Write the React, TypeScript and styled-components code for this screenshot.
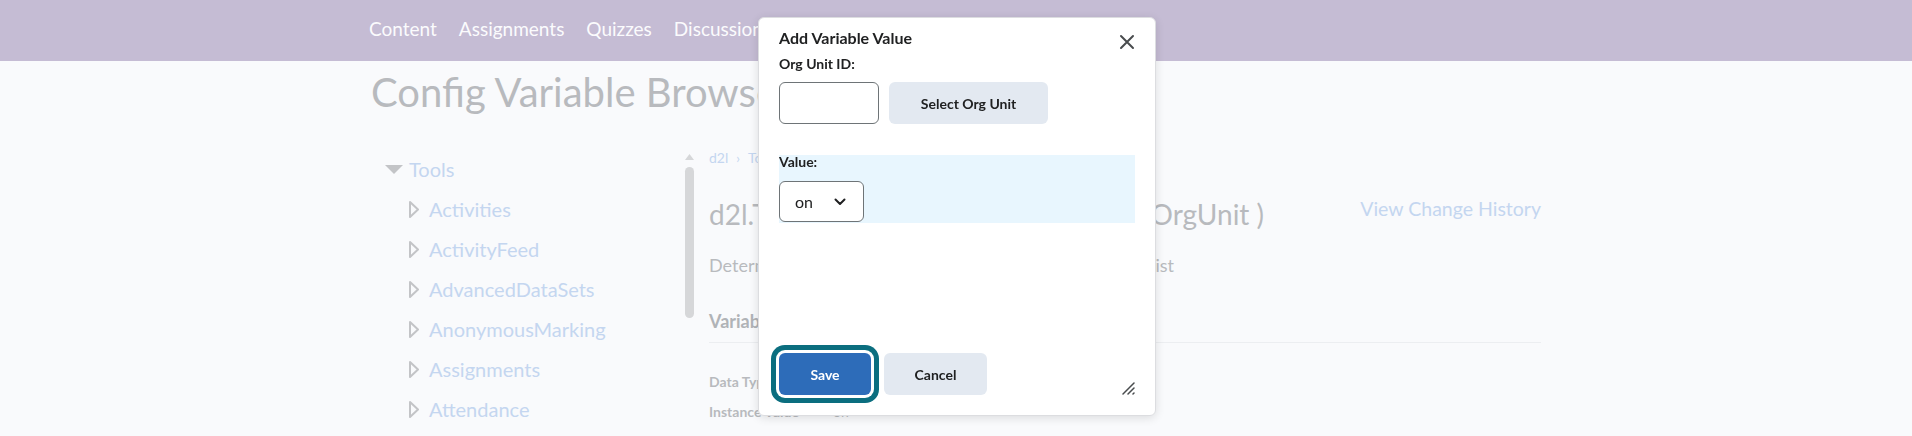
import React, { FC } from 'react';
import styled, { createGlobalStyle } from 'styled-components';

const GlobalStyle = createGlobalStyle`
  html, body {
    margin: 0;
    padding: 0;
    overflow: hidden;
    background-color: #f9fafc;
    font-family: Lato, "Open Sans", sans-serif;
  }
`;

const Header = styled.div`
  height: 61px;
  background-color: #c5bcd4;
`;

const Container = styled.div`
  width: 1170px;
  margin: 0 auto;
`;

const Nav = styled.nav`
  display: flex;
  gap: 22px;
  padding-top: 17px;
  margin-left: -2px;
`;

const NavItem = styled.span`
  font-size: 19px;
  line-height: 24px;
  color: #fbfbfd;
`;

const PageTitle = styled.h1`
  margin: 7px 0 0;
  font-size: 40px;
  line-height: 48px;
  font-weight: 400;
  color: #b8babe;
  white-space: nowrap;
`;

const Main = styled.div`
  display: grid;
  grid-template-columns: 314px 9px 1fr;
  margin-top: 32px;
`;

const Tree = styled.ul`
  list-style: none;
  margin: 0;
  padding: 1px 0 0 14px;
`;

const TreeRow = styled.li<{ $child?: boolean }>`
  display: flex;
  align-items: center;
  gap: ${(p) => (p.$child ? '10px' : '6px')};
  margin-left: ${(p) => (p.$child ? '24px' : '0')};
  height: 40px;
  line-height: 40px;
  font-size: 20px;
  color: #c4d6f0;
`;

const Scrollbar = styled.div`
  display: flex;
  flex-direction: column;
  align-items: center;
  padding-top: 6px;
`;

const ScrollThumb = styled.div`
  width: 9px;
  height: 151px;
  margin-top: 7px;
  border-radius: 5px;
  background-color: #d6d7d9;
`;

const Content = styled.div`
  padding-left: 15px;
  min-width: 0;
`;

const Breadcrumb = styled.div`
  font-size: 14px;
  line-height: 20px;
  color: #c4d6f0;
`;

const CrumbSep = styled.span`
  margin: 0 8px;
  font-size: 13px;
`;

const HeadingRow = styled.div`
  display: flex;
  justify-content: space-between;
  align-items: flex-start;
  margin-top: 29px;
`;

const VarHeading = styled.h2`
  margin: 0;
  font-size: 28px;
  line-height: 34px;
  font-weight: 400;
  color: #b8babe;
  white-space: nowrap;
`;

const HistoryLink = styled.span`
  font-size: 19.5px;
  line-height: 24px;
  color: #c4d6f0;
`;

const Description = styled.p`
  margin: 22px 0 0;
  font-size: 18px;
  line-height: 24px;
  color: #b8babe;
  white-space: nowrap;
`;

const SectionTitle = styled.h3`
  margin: 32px 0 0;
  padding-bottom: 9px;
  border-bottom: 1px solid #eceef1;
  font-size: 18px;
  line-height: 24px;
  font-weight: 700;
  color: #b0b3b7;
`;

const PropGrid = styled.div`
  display: grid;
  grid-template-columns: 124px 1fr;
  margin-top: 24px;
  font-size: 14px;
  line-height: 30px;
  color: #b8babe;
`;

const PropLabel = styled.span`
  font-weight: 700;
`;

const Overlay = styled.div`
  position: fixed;
  inset: 0;
`;

const Dialog = styled.div`
  position: absolute;
  left: 758px;
  top: 17px;
  width: 398px;
  height: 399px;
  box-sizing: border-box;
  padding: 7px 20px 20px;
  display: flex;
  flex-direction: column;
  background-color: #fff;
  border: 1px solid #dcdde0;
  border-radius: 6px;
  box-shadow: 0 2px 10px rgba(0, 0, 0, 0.12);
  color: #202122;
`;

const DialogHeader = styled.div`
  display: flex;
  justify-content: space-between;
  align-items: center;
`;

const DialogTitle = styled.h2`
  margin: 0;
  font-size: 16px;
  line-height: 24px;
  font-weight: 700;
`;

const CloseButton = styled.button`
  display: flex;
  width: 18px;
  height: 18px;
  margin: 8px -1px 0 0;
  padding: 0;
  border: none;
  background: none;
  color: #494c4e;
`;

const FieldLabel = styled.label<{ $tight?: boolean }>`
  display: block;
  margin-top: ${(p) => (p.$tight ? '0' : '3px')};
  font-size: 14px;
  line-height: ${(p) => (p.$tight ? '14px' : '20px')};
  font-weight: 700;
`;

const OrgRow = styled.div`
  display: flex;
  gap: 10px;
  margin-top: 8px;
`;

const TextInput = styled.input`
  width: 100px;
  height: 42px;
  box-sizing: border-box;
  border: 1px solid #6e7477;
  border-radius: 6px;
  background: #fff;
`;

const Button = styled.button<{ $primary?: boolean; $width: number }>`
  width: ${(p) => p.$width}px;
  height: 42px;
  border: none;
  border-radius: 6px;
  font-family: Lato, sans-serif;
  font-size: 14px;
  font-weight: 700;
  color: ${(p) => (p.$primary ? '#fff' : '#202122')};
  background-color: ${(p) => (p.$primary ? '#2d6cb9' : '#e3e9f1')};
  box-shadow: ${(p) => (p.$primary ? '0 0 0 3px #fff, 0 0 0 8px #0b6e7f' : 'none')};
`;

const ValueField = styled.div`
  margin-top: 31px;
  height: 68px;
  background-color: #e8f6fe;
`;

const SelectBox = styled.div`
  display: flex;
  align-items: center;
  justify-content: space-between;
  width: 85px;
  height: 41px;
  box-sizing: border-box;
  margin-top: 12px;
  padding: 0 17px 0 15px;
  border: 1px solid #6e7477;
  border-radius: 6px;
  background-color: #fff;
  font-size: 16px;
`;

const DialogFooter = styled.div`
  display: flex;
  align-items: flex-end;
  gap: 13px;
  margin-top: auto;
`;

const ResizeGrip = styled.svg`
  margin-left: auto;
`;

const treeItems = [
  'Activities',
  'ActivityFeed',
  'AdvancedDataSets',
  'AnonymousMarking',
  'Assignments',
  'Attendance',
];

const App: FC = () => {
  return (
    <>
      <GlobalStyle />
      <Header>
        <Container>
          <Nav>
            <NavItem>Content</NavItem>
            <NavItem>Assignments</NavItem>
            <NavItem>Quizzes</NavItem>
            <NavItem>Discussions</NavItem>
            <NavItem>Grades</NavItem>
          </Nav>
        </Container>
      </Header>
      <Container>
        <PageTitle>Config Variable Browser</PageTitle>
        <Main>
          <Tree>
            <TreeRow>
              <svg width="18" height="9" viewBox="0 0 18 9">
                <path d="M0 0 H18 L9 9 Z" fill="#c3c4c7" />
              </svg>
              Tools
            </TreeRow>
            {treeItems.map((item) => (
              <TreeRow $child key={item}>
                <svg width="10" height="17" viewBox="0 0 10 17">
                  <path d="M1 1 L9 8.5 L1 16 Z" fill="none" stroke="#c3c4c7" strokeWidth="2" strokeLinejoin="round" />
                </svg>
                {item}
              </TreeRow>
            ))}
          </Tree>
          <Scrollbar>
            <svg width="9" height="6" viewBox="0 0 9 6">
              <path d="M0 6 L4.5 0 L9 6 Z" fill="#d6d7d9" />
            </svg>
            <ScrollThumb />
          </Scrollbar>
          <Content>
            <Breadcrumb>
              d2l<CrumbSep>›</CrumbSep>Tools<CrumbSep>›</CrumbSep>Activities
            </Breadcrumb>
            <HeadingRow>
              <VarHeading>d2l.Tools.Activities.IsToolActivated ( OrgUnit )</VarHeading>
              <HistoryLink>View Change History</HistoryLink>
            </HeadingRow>
            <Description>Determines whether the tool is shown when org units exist</Description>
            <SectionTitle>Variable Details</SectionTitle>
            <PropGrid>
              <PropLabel>Data Type</PropLabel>
              <span>Boolean</span>
              <PropLabel>Instance Value</PropLabel>
              <span>on</span>
            </PropGrid>
          </Content>
        </Main>
      </Container>
      <Overlay>
        <Dialog role="dialog">
          <DialogHeader>
            <DialogTitle>Add Variable Value</DialogTitle>
            <CloseButton aria-label="Close">
              <svg width="18" height="18" viewBox="0 0 18 18">
                <path d="M3 3 L15 15 M15 3 L3 15" stroke="currentColor" strokeWidth="2" strokeLinecap="round" />
              </svg>
            </CloseButton>
          </DialogHeader>
          <FieldLabel>Org Unit ID:</FieldLabel>
          <OrgRow>
            <TextInput />
            <Button $width={159}>Select Org Unit</Button>
          </OrgRow>
          <ValueField>
            <FieldLabel $tight>Value:</FieldLabel>
            <SelectBox>
              <span>on</span>
              <svg width="12" height="8" viewBox="0 0 12 8">
                <path d="M1.5 1.5 L6 6 L10.5 1.5" fill="none" stroke="#202122" strokeWidth="2" strokeLinecap="round" strokeLinejoin="round" />
              </svg>
            </SelectBox>
          </ValueField>
          <DialogFooter>
            <Button $primary $width={92}>Save</Button>
            <Button $width={103}>Cancel</Button>
            <ResizeGrip width="14" height="14" viewBox="0 0 14 14">
              <path d="M13 2 L2 13 M13 7 L7 13 M13 12 L12 13" stroke="#494c4e" strokeWidth="1.5" strokeLinecap="round" />
            </ResizeGrip>
          </DialogFooter>
        </Dialog>
      </Overlay>
    </>
  );
};

export default App;
